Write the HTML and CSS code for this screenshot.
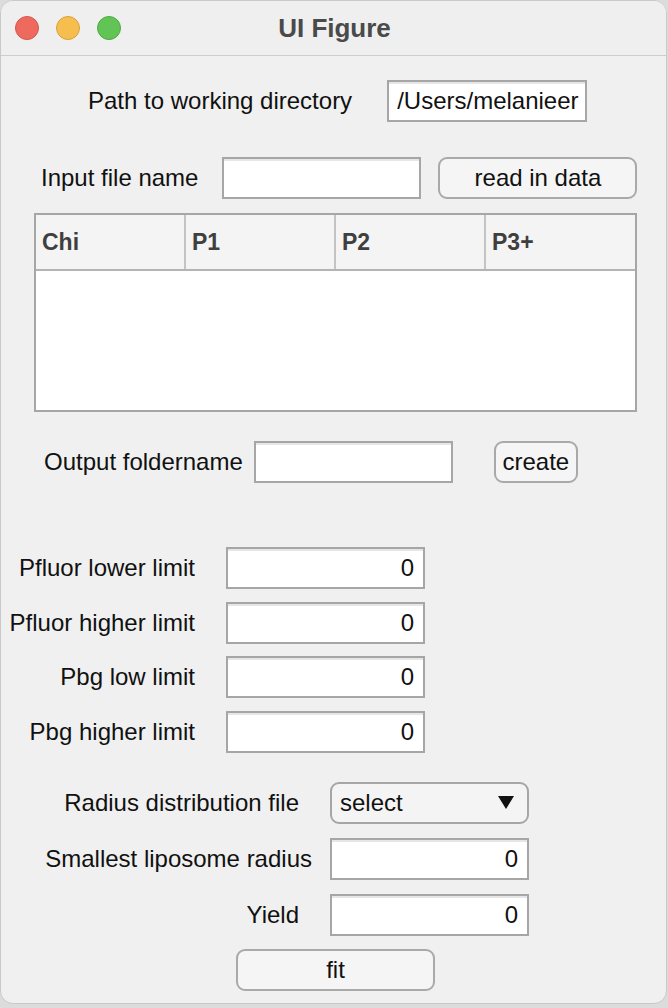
FILE: index.html
```html
<!DOCTYPE html>
<html>
<head>
<meta charset="utf-8">
<title>UI Figure</title>
<link rel="stylesheet" href="styles.css">
</head>
<body>
<div class="window">
  <div class="titlebar">
    <div class="lights">
      <span class="light red"></span>
      <span class="light yellow"></span>
      <span class="light green"></span>
    </div>
    <div class="title">UI Figure</div>
  </div>
  <div class="content">
    <div class="row row-path">
      <span class="label">Path to working directory</span>
      <div class="field field-path">/Users/melanieer</div>
    </div>
    <div class="row row-input">
      <span class="label">Input file name</span>
      <div class="field"></div>
      <button class="btn btn-read">read in data</button>
    </div>
    <div class="table">
      <div class="thead">
        <div class="th">Chi</div>
        <div class="th">P1</div>
        <div class="th">P2</div>
        <div class="th">P3+</div>
      </div>
      <div class="tbody"></div>
    </div>
    <div class="row row-output">
      <span class="label">Output foldername</span>
      <div class="field"></div>
      <button class="btn btn-create">create</button>
    </div>
    <div class="grid grid-limits">
      <span class="glabel">Pfluor lower limit</span><div class="field num">0</div>
      <span class="glabel">Pfluor higher limit</span><div class="field num">0</div>
      <span class="glabel">Pbg low limit</span><div class="field num">0</div>
      <span class="glabel">Pbg higher limit</span><div class="field num">0</div>
    </div>
    <div class="grid grid-fit">
      <span class="glabel short">Radius distribution file</span>
      <div class="dropdown"><span>select</span><svg class="caret" width="16" height="13" viewBox="0 0 16 13"><path d="M0 0 H16 L8 13 Z" fill="#111"/></svg></div>
      <span class="glabel">Smallest liposome radius</span><div class="field num">0</div>
      <span class="glabel short">Yield</span><div class="field num">0</div>
    </div>
    <div class="fitrow"><button class="btn btn-fit">fit</button></div>
  </div>
</div>
</body>
</html>
```

FILE: styles.css
```css
* { box-sizing: border-box; }
html, body { margin: 0; padding: 0; }
body {
  width: 668px;
  height: 1008px;
  background: #dcdcdc;
  font-family: "Liberation Sans", Arial, Helvetica, sans-serif;
  color: #111;
  overflow: hidden;
}
.window {
  width: 667px;
  height: 1004px;
  background: #f0f0f0;
  border: 1px solid #c9c9c9;
  border-radius: 13px;
  overflow: hidden;
}
.titlebar {
  height: 55px;
  border-bottom: 1px solid #cdcdcd;
  background: #efefef;
  display: flex;
  align-items: center;
  position: relative;
}
.lights {
  display: flex;
  gap: 17px;
  padding-left: 14px;
}
.light {
  width: 24px;
  height: 24px;
  border-radius: 50%;
  display: block;
}
.red { background: #ee6a5f; border: 1px solid #d5574d; }
.yellow { background: #f5be4f; border: 1px solid #d9a23d; }
.green { background: #61c454; border: 1px solid #4fa944; }
.title {
  position: absolute;
  left: 0; right: 0; top: 0; bottom: 0;
  display: flex;
  align-items: center;
  justify-content: center;
  font-weight: bold;
  font-size: 26px;
  color: #4a4a4a;
  padding-left: 2px;
}
.content {
  display: flex;
  flex-direction: column;
}
.row {
  display: flex;
  align-items: center;
  height: 42px;
}
.label { font-size: 24px; white-space: nowrap; }
.field {
  width: 199px;
  height: 42px;
  background: #fff;
  border: 2px solid #a6a6a6;
  font-size: 24px;
  display: flex;
  align-items: center;
  overflow: hidden;
  white-space: nowrap;
  box-shadow: inset 0 2px 0 #e6e6e6;
}
.field.num { justify-content: flex-end; padding-right: 9px; }
.btn {
  height: 42px;
  background: #f5f5f5;
  border: 2px solid #a9a9a9;
  border-radius: 9px;
  font-family: inherit;
  font-size: 24px;
  color: #111;
  padding: 0;
}
.row-path { margin-top: 24px; padding-left: 87px; gap: 35px; }
.field-path { padding-left: 8px; width: 200px; }
.row-input { margin-top: 35px; padding-left: 40px; gap: 24px; }
.btn-read { width: 199px; margin-left: -7px; }
.table {
  margin: 14px 0 0 33px;
  width: 603px;
  height: 199px;
  border: 2px solid #a6a6a6;
  background: #fff;
  display: flex;
  flex-direction: column;
}
.thead {
  height: 56px;
  display: grid;
  grid-template-columns: 150px 150px 150px 1fr;
  background: #f4f4f4;
  border-bottom: 2px solid #b4b4b4;
}
.th {
  font-weight: bold;
  font-size: 23px;
  color: #3f3f3f;
  display: flex;
  align-items: center;
  padding-left: 6px;
  border-right: 2px solid #c4c4c4;
}
.th:last-child { border-right: none; }
.tbody { flex: 1; }
.row-output { margin-top: 29px; padding-left: 43px; gap: 11px; }
.btn-create { width: 84px; margin-left: 30px; }
.grid {
  display: grid;
  align-items: center;
}
.glabel { font-size: 24px; text-align: right; white-space: nowrap; }
.grid-limits {
  margin-top: 64px;
  grid-template-columns: 194px 199px;
  grid-auto-rows: 42px;
  column-gap: 31px;
  row-gap: 12.5px;
}
.grid-fit {
  margin-top: 29px;
  grid-template-columns: 311px 199px;
  grid-auto-rows: 42px;
  column-gap: 18px;
  row-gap: 14px;
}
.glabel.short { padding-right: 13px; }
.dropdown {
  width: 199px;
  height: 42px;
  background: #f4f4f4;
  border: 2px solid #a6a6a6;
  border-radius: 9px;
  display: flex;
  align-items: center;
  justify-content: space-between;
  padding: 0 13px 0 8px;
  font-size: 24px;
}
.caret { display: block; }
.fitrow { margin-top: 13px; padding-left: 235px; }
.btn-fit { width: 199px; }
```
